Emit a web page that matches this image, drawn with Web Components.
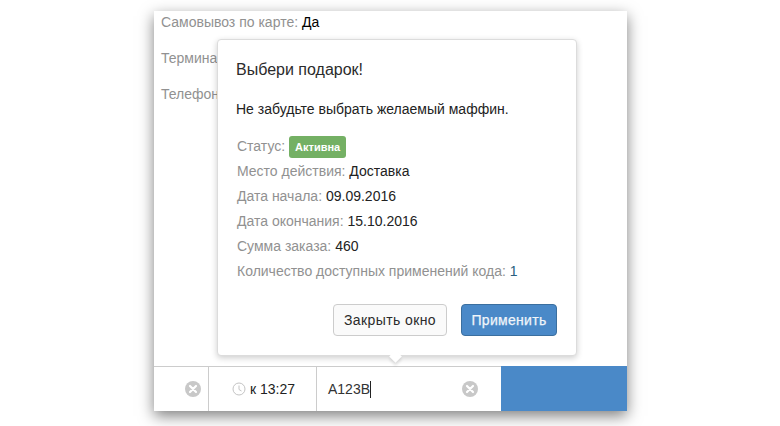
<!DOCTYPE html>
<html lang="ru">
<head>
<meta charset="utf-8">
<style>
  html, body { margin: 0; height: 100%; background: #fff; overflow: hidden; }
  body { font: 14px/20px "Liberation Sans", Arial, sans-serif; color: #222; }
</style>
</head>
<body>
<order-card>
  <info-line label="Самовывоз по карте:" value="Да"></info-line>
  <info-line label="Терминал:" value=""></info-line>
  <info-line label="Телефон:" value=""></info-line>
  <gift-popover slot="popover"></gift-popover>
  <order-bar slot="bar"></order-bar>
</order-card>

<script>
const CLEAR_ICON = `
  <svg width="16" height="16" viewBox="0 0 16 16" aria-hidden="true">
    <circle cx="8" cy="8" r="8" fill="#c8c8c8"/>
    <path d="M5 5l6 6M11 5l-6 6" stroke="#fff" stroke-width="2.2" stroke-linecap="round"/>
  </svg>`;

class OrderCard extends HTMLElement {
  constructor() {
    super();
    this.attachShadow({ mode: "open" });
  }

  connectedCallback() {
    this.shadowRoot.innerHTML = `
      <style>
        :host { display: block; width: 473px; height: 400px; margin: 11px 0 0 154px; position: relative;
          background: #fff; box-shadow: 0 5px 14px rgba(0,0,0,.5); }
        .content { box-sizing: border-box; height: 355px; padding: 1px 0 0 7px; overflow: hidden; }
        .popover { position: absolute; left: 63px; top: 28px; }
      </style>
      <div class="content"><slot></slot></div>
      <slot name="bar"></slot>
      <div class="popover"><slot name="popover"></slot></div>
    `;
  }
}

class InfoLine extends HTMLElement {
  constructor() {
    super();
    this.attachShadow({ mode: "open" });
  }

  connectedCallback() {
    this.shadowRoot.innerHTML = `
      <style>
        :host { display: block; height: 36px; line-height: 20px; white-space: nowrap; color: #000; }
        span { color: #919191; }
      </style>
      <span>${this.getAttribute("label")}</span> ${this.getAttribute("value")}
    `;
  }
}

class GiftPopover extends HTMLElement {
  constructor() {
    super();
    this.attachShadow({ mode: "open" });
  }

  connectedCallback() {
    const rows = [
      ["Место действия:", "Доставка", ""],
      ["Дата начала:", "09.09.2016", ""],
      ["Дата окончания:", "15.10.2016", ""],
      ["Сумма заказа:", "460", ""],
      ["Количество доступных применений кода:", "1", "link"]
    ];
    this.shadowRoot.innerHTML = `
      <style>
        :host { display: block; box-sizing: border-box; width: 360px; height: 317px; padding: 20px 19px 0 18px;
          background: #fff; border: 1px solid #dcdcdc; border-radius: 4px; box-shadow: 0 2px 6px rgba(0,0,0,.2);
          color: #222; position: relative; }
        h2 { margin: 0; font-size: 16px; line-height: 20px; font-weight: 400; color: #2b2b2b; }
        p { margin: 19px 0 0; line-height: 20px; }
        .rows { margin: 14px 0 0 1px; display: grid; grid-auto-rows: 25px; align-items: center; white-space: nowrap; }
        .status { padding-top: 2px; }
        .k { color: #919191; }
        .link { color: #2a5f80; }
        .badge { display: inline-block; background: #74b064; color: #fff; font-size: 11px; font-weight: 700;
          line-height: 22px; padding: 0 6px; border-radius: 3px; vertical-align: 0; }
        .actions { display: flex; justify-content: flex-end; gap: 14px; margin-top: 21px; }
        .btn { box-sizing: border-box; height: 32px; border-radius: 4px; font-size: 14px; line-height: 30px;
          text-align: center; }
        .close { width: 114px; border: 1px solid #ccc; background: #fafafa; color: #2b2b2b; letter-spacing: .4px; }
        .apply { width: 96px; border: 1px solid #3b6f9f; background: #4a89c8; color: #f0f5fa;
          letter-spacing: .3px; -webkit-text-stroke: .25px #f0f5fa; }
        .tail { position: absolute; left: 173px; bottom: -6px; width: 9px; height: 9px; background: #fff;
          transform: rotate(45deg); box-shadow: 2px 2px 3px rgba(0,0,0,.12); }
      </style>
      <h2>Выбери подарок!</h2>
      <p>Не забудьте выбрать желаемый маффин.</p>
      <div class="rows">
        <div class="status"><span class="k">Статус:</span> <span class="badge">Активна</span></div>
        ${rows.map(r => `<div><span class="k">${r[0]}</span> <span class="${r[2]}">${r[1]}</span></div>`).join("")}
      </div>
      <div class="actions">
        <div class="btn close">Закрыть окно</div>
        <div class="btn apply">Применить</div>
      </div>
      <div class="tail"></div>
    `;
  }
}

class OrderBar extends HTMLElement {
  constructor() {
    super();
    this.attachShadow({ mode: "open" });
  }

  connectedCallback() {
    this.shadowRoot.innerHTML = `
      <style>
        :host { display: flex; height: 45px; box-sizing: border-box; border-top: 1px solid #ccc; background: #fff; }
        .cell { display: flex; align-items: center; box-sizing: border-box; }
        .first { width: 55px; justify-content: flex-end; padding-right: 7px; border-right: 1px solid #ccc; }
        .time { width: 108px; padding-left: 23px; gap: 4px; border-right: 1px solid #ccc; color: #222; }
        .code { width: 184px; padding: 0 23px 0 11px; justify-content: space-between; color: #333; }
        .caret { display: inline-block; width: 1px; height: 17px; background: #222; vertical-align: -4px; }
        .submit { flex: 1; margin-top: -1px; background: #4a89c8; }
      </style>
      <div class="cell first">${CLEAR_ICON}</div>
      <div class="cell time">
        <svg width="14" height="14" viewBox="0 0 14 14" aria-hidden="true" fill="none" stroke="#c4c4c4">
          <circle cx="7" cy="7" r="6"/>
          <path d="M7 3.5V7.5L9.5 9"/>
        </svg>
        <span>к 13:27</span>
      </div>
      <div class="cell code"><span>А123В<i class="caret"></i></span>${CLEAR_ICON}</div>
      <div class="submit"></div>
    `;
  }
}

customElements.define("order-card", OrderCard);
customElements.define("info-line", InfoLine);
customElements.define("gift-popover", GiftPopover);
customElements.define("order-bar", OrderBar);
</script>
</body>
</html>
